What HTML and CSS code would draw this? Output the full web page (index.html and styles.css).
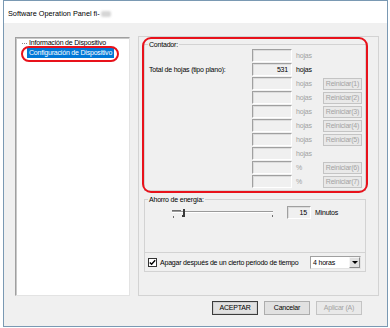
FILE: index.html
```html
<!DOCTYPE html>
<html>
<head>
<meta charset="utf-8">
<link rel="stylesheet" href="styles.css">
</head>
<body>
<div class="window">
  <div class="titlebar">Software Operation Panel fi-<span class="redact"></span></div>
  <div class="client">
    <div class="main">
      <div class="tree">
        <div class="node"><span class="branch"></span><span class="lbl">Información de Dispositivo</span></div>
        <div class="node"><span class="lbl sel">Configuración de Dispositivo</span></div>
        <div class="mark-ellipse"></div>
      </div>
      <div class="panel">
        <fieldset class="group counter">
          <legend>Contador:</legend>
          <div class="rows">
            <div class="lab"></div><div class="box"></div><div class="unit dis">hojas</div><div></div>
            <div class="lab">Total de hojas (tipo plano):</div><div class="box">531</div><div class="unit">hojas</div><div></div>
            <div class="lab"></div><div class="box"></div><div class="unit dis">hojas</div><div class="rbtn">Reiniciar(1)</div>
            <div class="lab"></div><div class="box"></div><div class="unit dis">hojas</div><div class="rbtn">Reiniciar(2)</div>
            <div class="lab"></div><div class="box"></div><div class="unit dis">hojas</div><div class="rbtn">Reiniciar(3)</div>
            <div class="lab"></div><div class="box"></div><div class="unit dis">hojas</div><div class="rbtn">Reiniciar(4)</div>
            <div class="lab"></div><div class="box"></div><div class="unit dis">hojas</div><div class="rbtn">Reiniciar(5)</div>
            <div class="lab"></div><div class="box"></div><div class="unit dis">hojas</div><div></div>
            <div class="lab"></div><div class="box"></div><div class="unit dis">%</div><div class="rbtn">Reiniciar(6)</div>
            <div class="lab"></div><div class="box"></div><div class="unit dis">%</div><div class="rbtn">Reiniciar(7)</div>
          </div>
        </fieldset>
        <fieldset class="group energy">
          <legend>Ahorro de energía:</legend>
          <div class="slider-row">
            <svg class="slider" width="102" height="13" viewBox="0 0 102 13">
              <rect x="0" y="5" width="101" height="1" fill="#9a9a9a"/>
              <rect x="0" y="6" width="101" height="1" fill="#ffffff"/>
              <rect x="0" y="4" width="9" height="1" fill="#6e6e6e"/>
              <rect x="11" y="3" width="2" height="8" fill="#3a3a3a"/>
              <rect x="10" y="9" width="1" height="2" fill="#3a3a3a"/>
              <rect x="1" y="10" width="1" height="2" fill="#6e6e6e"/>
              <rect x="100" y="9" width="1" height="2" fill="#6e6e6e"/>
            </svg>
            <div class="box small">15</div>
            <div class="minutes">Minutos</div>
          </div>
          <div class="check-row">
            <span class="check"><svg width="7" height="7" viewBox="0 0 7 7"><path d="M0.8 3.4 L2.6 5.3 L6.2 1.2" fill="none" stroke="#000" stroke-width="1.4"/></svg></span>
            <span class="check-label">Apagar después de un cierto periodo de tiempo</span>
            <div class="select"><span class="sel-text">4 horas</span><span class="drop"><span class="tri"></span></span></div>
          </div>
        </fieldset>
        <div class="mark-rect"></div>
      </div>
    </div>
    <div class="buttons">
      <div class="btn default">ACEPTAR</div>
      <div class="btn">Cancelar</div>
      <div class="btn disabled">Aplicar (A)</div>
    </div>
  </div>
</div>
</body>
</html>
```
FILE: styles.css
```css
body {
  margin: 0;
  background: #ffffff;
  font-family: "Liberation Sans", Arial, sans-serif;
  font-size: 7px;
  letter-spacing: -0.2px;
  color: #000;
}

.window {
  margin-left: 3px;
  width: 385px;
  height: 327px;
  box-sizing: border-box;
  border: 1px solid #7a99b3;
  background: #f0f0f0;
  display: flex;
  flex-direction: column;
}

.titlebar {
  flex: none;
  height: 22px;
  box-sizing: border-box;
  background: #ffffff;
  padding: 4px 0 0 4px;
  line-height: 18px;
  font-size: 7.3px;
  letter-spacing: 0;
  white-space: nowrap;
}

.redact {
  display: inline-block;
  width: 10px;
  height: 6px;
  margin-left: 1px;
  vertical-align: -1px;
  background: #d6d6d6;
  border-radius: 2px;
  filter: blur(1px);
}

.client {
  flex: 1;
  display: flex;
  flex-direction: column;
  padding: 13px 8px 0 11px;
}

.main {
  display: flex;
  gap: 8px;
  height: 260px;
}

.tree {
  position: relative;
  width: 115px;
  height: 259px;
  margin-top: 1px;
  box-sizing: border-box;
  background: #ffffff;
  border: 1px solid;
  border-color: #a0a0a0 #e3e3e3 #e3e3e3 #a0a0a0;
  box-shadow: inset 1px 1px 0 #c8c8c8;
}

.node {
  position: relative;
  height: 10px;
  line-height: 10px;
  padding-left: 11px;
  white-space: nowrap;
}

.branch {
  position: absolute;
  left: 6px;
  top: 5px;
  width: 5px;
  border-top: 1px dotted #8a8a8a;
}

.lbl {
  display: inline-block;
  padding: 0 2px;
}

.lbl.sel {
  background: #0078d7;
  color: #ffffff;
}

.mark-ellipse {
  position: absolute;
  left: 5px;
  top: 8px;
  width: 98px;
  height: 16px;
  box-sizing: border-box;
  border: 2px solid #e8121b;
  border-radius: 9px;
}

.panel {
  position: relative;
  width: 241px;
  height: 260px;
  box-sizing: border-box;
  border: 1px solid #d3d3d3;
}

.group {
  margin: 0 0 0 5px;
  padding: 0;
  width: 222px;
  box-sizing: border-box;
  min-width: 0;
  border: 1px solid #d3d3d3;
}

.group legend {
  margin-left: 3px;
  padding: 0 1px;
  line-height: 9px;
  height: 9px;
}

.counter {
  margin-top: 3px;
  padding-bottom: 1px;
}

.energy {
  margin-top: 4px;
}

.rows {
  display: grid;
  grid-template-columns: 103px 40px 31px 39px;
  grid-auto-rows: 14px;
  padding-left: 4px;
}

.lab {
  line-height: 13px;
  white-space: nowrap;
}

.box {
  height: 13px;
  box-sizing: border-box;
  border: 1px solid;
  border-color: #a0a0a0 #ffffff #ffffff #a0a0a0;
  box-shadow: inset 1px 1px 0 #dcdcdc;
  background: #f0f0f0;
  text-align: right;
  padding-right: 3px;
  line-height: 11px;
}

.unit {
  line-height: 13px;
  padding-left: 4px;
}

.unit.dis {
  color: #a0a0a0;
}

.rbtn {
  margin-top: 1px;
  height: 12px;
  box-sizing: border-box;
  border: 1px solid #c4c4c4;
  background: #e9e9e9;
  color: #a3a3a3;
  text-align: center;
  line-height: 10px;
  white-space: nowrap;
}

.slider-row {
  display: flex;
  align-items: flex-start;
  height: 48px;
  box-sizing: border-box;
  padding: 2px 0 0 27px;
}

.slider {
  display: block;
  flex: none;
}

.box.small {
  width: 24px;
  margin-left: 13px;
  color: #000;
}

.minutes {
  margin-left: 4px;
  line-height: 13px;
}

.check-row {
  display: flex;
  align-items: center;
  height: 19px;
  box-sizing: border-box;
  border-top: 1px solid #d3d3d3;
  padding: 0 4px 0 3px;
}

.check {
  width: 9px;
  height: 9px;
  box-sizing: border-box;
  border: 1px solid #333333;
  background: #ffffff;
  display: flex;
  align-items: center;
  justify-content: center;
}

.check svg {
  display: block;
}

.check-label {
  margin-left: 3px;
  white-space: nowrap;
}

.select {
  margin-left: auto;
  width: 51px;
  height: 13px;
  box-sizing: border-box;
  border: 1px solid;
  border-color: #a0a0a0 #e3e3e3 #e3e3e3 #a0a0a0;
  background: #ffffff;
  display: flex;
  align-items: center;
}

.sel-text {
  flex: 1;
  padding-left: 2px;
  line-height: 11px;
}

.drop {
  width: 11px;
  height: 11px;
  box-sizing: border-box;
  border: 1px solid;
  border-color: #f5f5f5 #8a8a8a #8a8a8a #f5f5f5;
  background: #e1e1e1;
  display: flex;
  align-items: center;
  justify-content: center;
}

.tri {
  width: 0;
  height: 0;
  border-left: 3px solid transparent;
  border-right: 3px solid transparent;
  border-top: 3px solid #000;
}

.mark-rect {
  position: absolute;
  left: 3px;
  top: 0;
  width: 226px;
  height: 156px;
  box-sizing: border-box;
  border: 2px solid #e8121b;
  border-radius: 9px;
}

.buttons {
  display: flex;
  justify-content: flex-end;
  gap: 6px;
  margin-top: 5px;
  padding-right: 17px;
}

.btn {
  width: 46px;
  height: 14px;
  box-sizing: border-box;
  border: 1px solid #adadad;
  background: #e1e1e1;
  text-align: center;
  line-height: 12px;
  white-space: nowrap;
}

.btn.default {
  border-color: #3c3c3c;
  box-shadow: inset 0 0 0 1px #d0d0d0;
}

.btn.disabled {
  border-color: #c4c4c4;
  background: #e9e9e9;
  color: #a3a3a3;
}
```
